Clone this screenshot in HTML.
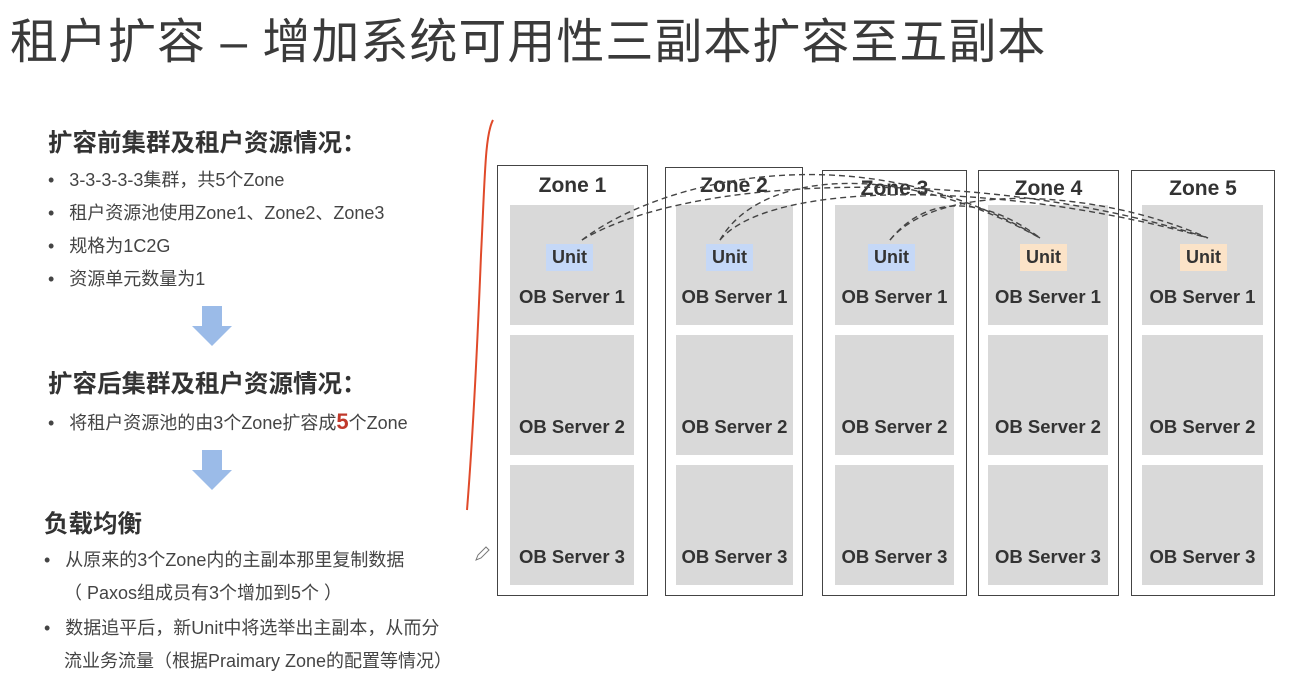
<!DOCTYPE html><html><head><meta charset="utf-8"><style>
body{margin:0;width:1292px;height:673px;background:#fff;position:relative;overflow:hidden;font-family:"Liberation Sans","Noto Sans CJK SC",sans-serif;color:#333}
.a{position:absolute;white-space:nowrap}
.t{left:10px;top:2px;font-size:48px;color:#3a3a3a;letter-spacing:1px}
.h{font-size:24.5px;font-weight:bold;color:#333}
.li{font-size:18px;color:#444}
.zone{position:absolute;border:1.5px solid #444;box-sizing:border-box;top:0}
.zt{position:absolute;width:100%;text-align:center;font-weight:bold;font-size:21px;color:#333}
.srv{position:absolute;background:#d9d9d9;font-weight:bold;font-size:18.5px;color:#333;text-align:center}
.srv span{position:absolute;bottom:17px;left:-4px;right:-4px}
.u{position:absolute;font-weight:bold;font-size:18px;color:#333;padding:3px 6px}
</style></head><body>
<div class="a t">租户扩容 – 增加系统可用性三副本扩容至五副本</div>
<div class="a h" style="left:48px;top:124px">扩容前集群及租户资源情况：</div>
<div class="a li" style="left:48px;top:166px">•&nbsp;&nbsp; 3-3-3-3-3集群，共5个Zone</div>
<div class="a li" style="left:48px;top:199px">•&nbsp;&nbsp; 租户资源池使用Zone1、Zone2、Zone3</div>
<div class="a li" style="left:48px;top:232px">•&nbsp;&nbsp; 规格为1C2G</div>
<div class="a li" style="left:48px;top:265px">•&nbsp;&nbsp; 资源单元数量为1</div>
<svg class="a" style="left:192px;top:306px" width="40" height="42"><path d="M10 0H30V20H40L20 40L0 20H10Z" fill="#9bbbe8"/></svg>
<div class="a h" style="left:48px;top:365px">扩容后集群及租户资源情况：</div>
<div class="a li" style="left:48px;top:409px">•&nbsp;&nbsp; 将租户资源池的由3个Zone扩容成<b style="color:#c0392b;font-size:22px">5</b>个Zone</div>
<svg class="a" style="left:192px;top:450px" width="40" height="42"><path d="M10 0H30V20H40L20 40L0 20H10Z" fill="#9bbbe8"/></svg>
<div class="a h" style="left:44px;top:505px">负载均衡</div>
<div class="a li" style="left:44px;top:546px">•&nbsp;&nbsp; 从原来的3个Zone内的主副本那里复制数据</div>
<div class="a li" style="left:64px;top:579px">（ Paxos组成员有3个增加到5个 ）</div>
<div class="a li" style="left:44px;top:614px">•&nbsp;&nbsp; 数据追平后，新Unit中将选举出主副本，从而分</div>
<div class="a li" style="left:64px;top:647px">流业务流量（根据Praimary Zone的配置等情况）</div>
<svg class="a" style="left:455px;top:115px" width="40" height="400"><path d="M38 5C30 20 30 60 26 140C22 240 18 320 12 395" stroke="#e04a2a" stroke-width="2" fill="none"/></svg>

<div class="zone" style="left:497px;top:165px;width:151px;height:431px"></div>
<div class="zone" style="left:665px;top:167px;width:138px;height:429px"></div>
<div class="zone" style="left:822px;top:170px;width:145px;height:426px"></div>
<div class="zone" style="left:978px;top:170px;width:141px;height:426px"></div>
<div class="zone" style="left:1131px;top:170px;width:144px;height:426px"></div>
<div class="a zt" style="left:497px;top:174px;width:151px">Zone 1</div>
<div class="a zt" style="left:665px;top:174px;width:138px">Zone 2</div>
<div class="a zt" style="left:822px;top:177px;width:145px">Zone 3</div>
<div class="a zt" style="left:978px;top:177px;width:141px">Zone 4</div>
<div class="a zt" style="left:1131px;top:177px;width:144px">Zone 5</div>

<div class="srv" style="left:510px;top:205px;width:124px;height:120px"><span>OB Server 1</span></div>
<div class="srv" style="left:510px;top:335px;width:124px;height:120px"><span>OB Server 2</span></div>
<div class="srv" style="left:510px;top:465px;width:124px;height:120px"><span>OB Server 3</span></div>
<div class="srv" style="left:676px;top:205px;width:117px;height:120px"><span>OB Server 1</span></div>
<div class="srv" style="left:676px;top:335px;width:117px;height:120px"><span>OB Server 2</span></div>
<div class="srv" style="left:676px;top:465px;width:117px;height:120px"><span>OB Server 3</span></div>
<div class="srv" style="left:835px;top:205px;width:119px;height:120px"><span>OB Server 1</span></div>
<div class="srv" style="left:835px;top:335px;width:119px;height:120px"><span>OB Server 2</span></div>
<div class="srv" style="left:835px;top:465px;width:119px;height:120px"><span>OB Server 3</span></div>
<div class="srv" style="left:988px;top:205px;width:120px;height:120px"><span>OB Server 1</span></div>
<div class="srv" style="left:988px;top:335px;width:120px;height:120px"><span>OB Server 2</span></div>
<div class="srv" style="left:988px;top:465px;width:120px;height:120px"><span>OB Server 3</span></div>
<div class="srv" style="left:1142px;top:205px;width:121px;height:120px"><span>OB Server 1</span></div>
<div class="srv" style="left:1142px;top:335px;width:121px;height:120px"><span>OB Server 2</span></div>
<div class="srv" style="left:1142px;top:465px;width:121px;height:120px"><span>OB Server 3</span></div>

<div class="u" style="left:546px;top:244px;background:#c5d8f7">Unit</div>
<div class="u" style="left:706px;top:244px;background:#c5d8f7">Unit</div>
<div class="u" style="left:868px;top:244px;background:#c5d8f7">Unit</div>
<div class="u" style="left:1020px;top:244px;background:#fbe3c8">Unit</div>
<div class="u" style="left:1180px;top:244px;background:#fbe3c8">Unit</div>

<svg class="a" style="left:0;top:0" width="1292" height="673"><g stroke="#444" stroke-width="1.4" fill="none" stroke-dasharray="6,4">
<path d="M582 240C660 180 860 130 1040 238"/>
<path d="M582 240C700 170 1000 170 1208 238"/>
<path d="M720 240C760 170 900 160 1040 238"/>
<path d="M720 240C770 180 1000 180 1208 238"/>
<path d="M890 240C930 190 990 200 1040 238"/>
<path d="M890 240C940 180 1100 190 1208 238"/>
</g></svg>
<svg class="a" style="left:474px;top:546px" width="16" height="16"><path d="M2 14L4 9L12 1L15 4L7 12Z" stroke="#777" fill="none"/></svg>
</body></html>
